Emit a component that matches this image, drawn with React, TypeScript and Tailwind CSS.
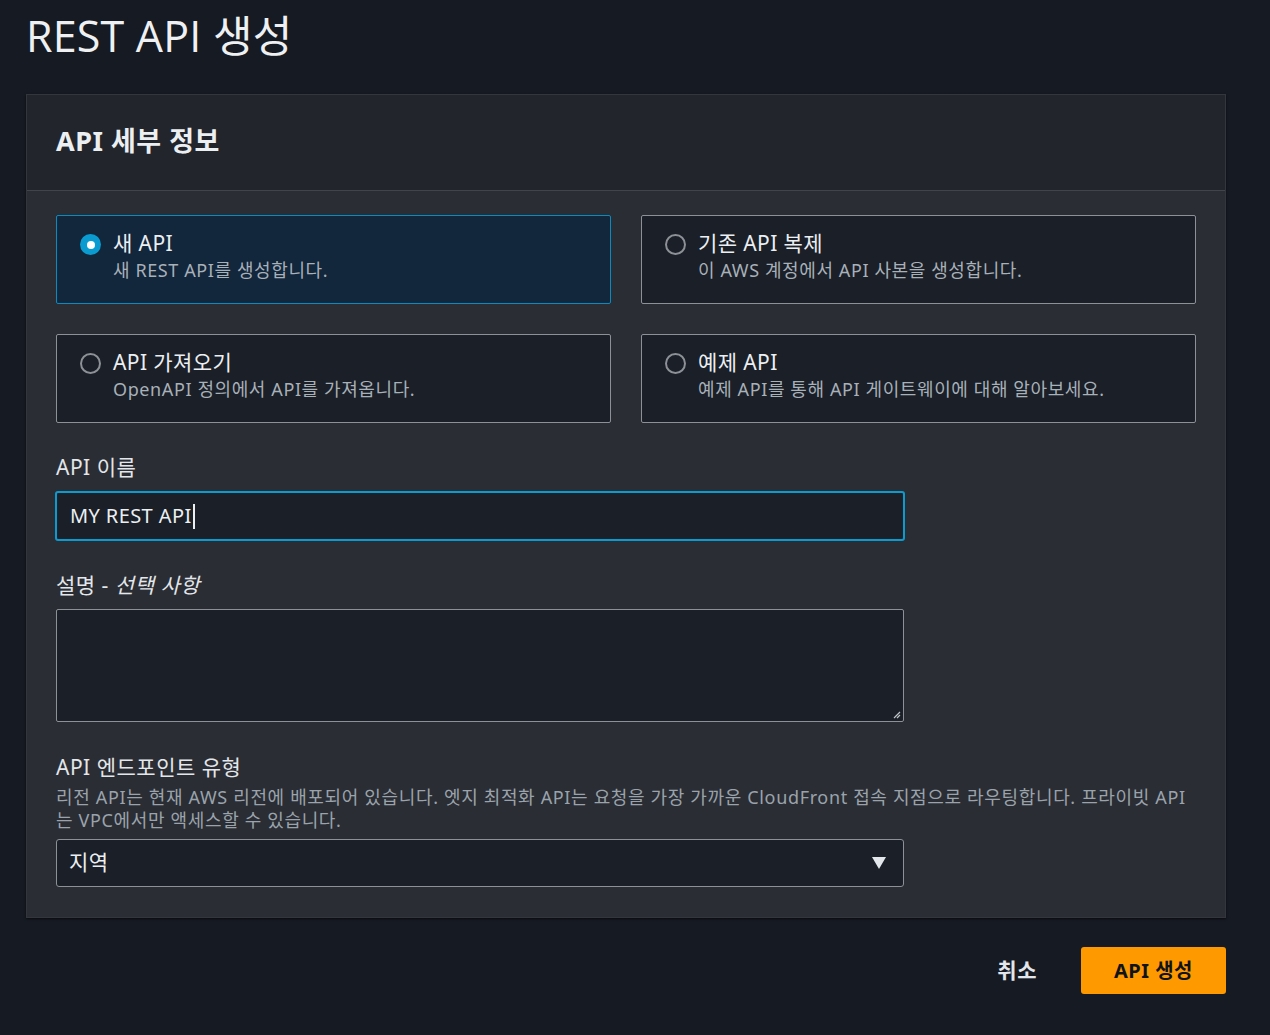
import React from "react";

const font = { fontFamily: '"Noto Sans", "Noto Sans CJK KR", sans-serif' };

function Radio({ checked }: { checked?: boolean }) {
  return checked ? (
    <span className="mt-[5px] flex h-[21px] w-[21px] shrink-0 items-center justify-center rounded-full bg-[#0a9cd0]">
      <span className="h-[8px] w-[8px] rounded-full bg-white" />
    </span>
  ) : (
    <span className="mt-[5px] h-[21px] w-[21px] shrink-0 rounded-full border-2 border-[#8d9096]" />
  );
}

function Card({ title, desc, checked }: { title: string; desc: string; checked?: boolean }) {
  return (
    <div
      className={
        "flex h-[89px] gap-[12px] rounded-[2px] border px-[23px] pt-[13px] " +
        (checked ? "border-[#0a8bbf] bg-[#12263c]" : "border-[#8d9096] bg-[#1a1f28]")
      }
    >
      <Radio checked={checked} />
      <div className="flex flex-col">
        <div className="text-[21px] leading-[28px] tracking-[0.4px] text-[#eceff2]">{title}</div>
        <div className="text-[18px] leading-[27px] tracking-[0.6px] text-[#a8b0b8]">{desc}</div>
      </div>
    </div>
  );
}

export default function App() {
  return (
    <div className="min-h-[1035px] bg-[#161a22] px-[26px] pt-[8px]" style={font}>
      <h1
        className="text-[43px] leading-[56px] tracking-[0.2px] text-[#eef0f2]"
        style={{ fontFamily: '"Open Sans", "Noto Sans CJK KR", sans-serif' }}
      >
        REST API 생성
      </h1>
      <div className="mt-[30px] w-[1200px] border border-[#33373d] bg-[#2a2d33] shadow-[0_1px_2px_rgba(0,0,0,0.6)]">
        <div className="flex h-[96px] items-center border-b border-[#41454b] bg-[#22262c] px-[29px] pb-[3px]">
          <h2 className="text-[27px] font-bold tracking-[0.5px] text-[#eceff2]">API 세부 정보</h2>
        </div>
        <div className="px-[29px] pb-[30px] pt-[24px]">
          <div className="grid w-[1140px] grid-cols-2 gap-x-[30px] gap-y-[30px]">
            <Card checked title="새 API" desc="새 REST API를 생성합니다." />
            <Card title="기존 API 복제" desc="이 AWS 계정에서 API 사본을 생성합니다." />
            <Card title="API 가져오기" desc="OpenAPI 정의에서 API를 가져옵니다." />
            <Card title="예제 API" desc="예제 API를 통해 API 게이트웨이에 대해 알아보세요." />
          </div>

          <div className="mt-[30px] w-[848px]">
            <div className="text-[21px] leading-[28px] tracking-[0.5px] text-[#e3e6ea]">API 이름</div>
            <div className="-mx-[1px] mt-[10px] flex h-[50px] items-center rounded-[3px] border-2 border-[#0a9cd0] bg-[#1a1f28] px-[13px]">
              <span className="text-[20px] tracking-[0.4px] text-[#eceff2]">MY REST API</span>
              <span className="ml-[1px] h-[25px] w-[2px] bg-[#eceff2]" />
            </div>

            <div className="mt-[30px] text-[21px] leading-[28px] tracking-[0.5px] text-[#e3e6ea]">
              설명 - <i>선택 사항</i>
            </div>
            <div className="relative mt-[10px] h-[113px] rounded-[2px] border border-[#8d9096] bg-[#1a1f28]">
              <svg className="absolute bottom-[2px] right-[2px]" width="10" height="10" viewBox="0 0 10 10">
                <path d="M9 3 L3 9 M9 6 L6 9" stroke="#c0c4c8" strokeWidth="1.2" />
              </svg>
            </div>
          </div>

          <div className="mt-[31px]">
            <div className="text-[21px] leading-[28px] tracking-[0.5px] text-[#e3e6ea]">API 엔드포인트 유형</div>
            <div className="mt-[5px] w-[1140px] text-[18px] leading-[23px] tracking-[0.65px] text-[#9aa3ac]">
              리전 API는 현재 AWS 리전에 배포되어 있습니다. 엣지 최적화 API는 요청을 가장 가까운 CloudFront 접속 지점으로 라우팅합니다. 프라이빗 API는 VPC에서만 액세스할 수 있습니다.
            </div>
            <div className="mt-[7px] flex h-[48px] w-[848px] items-center justify-between rounded-[3px] border border-[#8d9096] bg-[#1a1f28] pl-[12px] pr-[16px]">
              <span className="text-[21px] tracking-[0.5px] text-[#eceff2]">지역</span>
              <svg width="16" height="14" viewBox="0 0 16 14">
                <path d="M1 1 H15 L8 13 Z" fill="#e3e6ea" />
              </svg>
            </div>
          </div>
        </div>
      </div>

      <div className="flex w-[1200px] items-center justify-end gap-[44px] pt-[29px]">
        <span className="text-[21px] font-bold tracking-[0.5px] text-[#e3e6ea]">취소</span>
        <button className="h-[47px] w-[145px] rounded-[3px] bg-[#ff9900] text-[20px] font-bold tracking-[0.5px] text-[#0f141a]">
          API 생성
        </button>
      </div>
    </div>
  );
}
